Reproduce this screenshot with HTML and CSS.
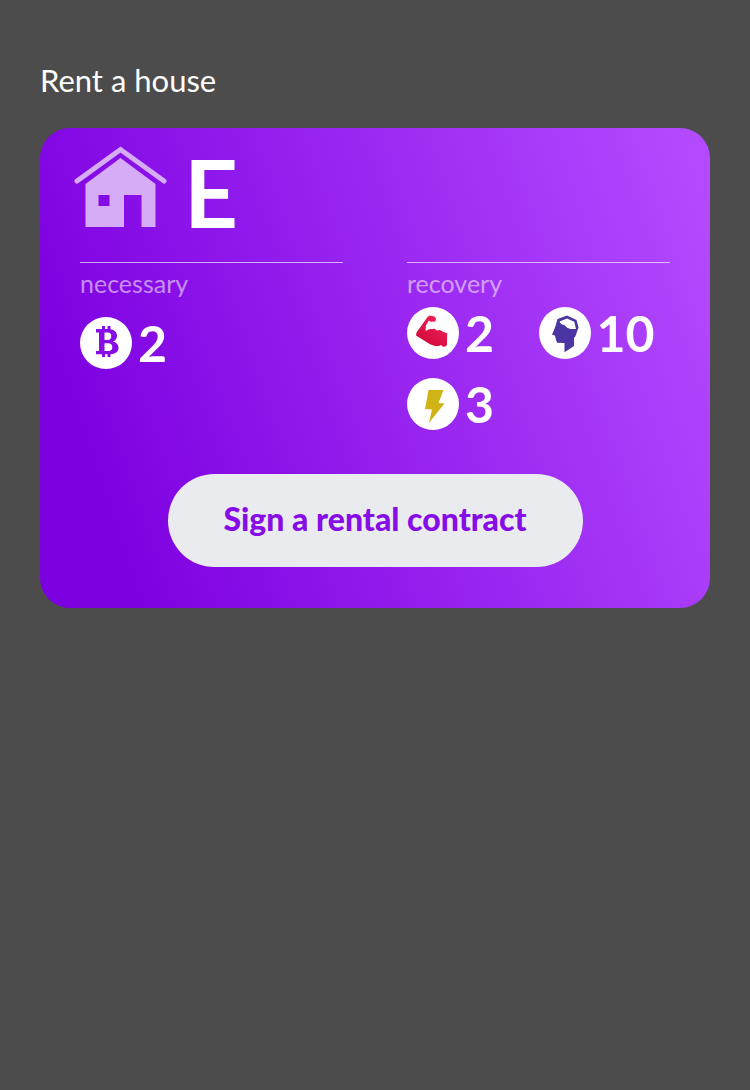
FILE: index.html
```html
<!DOCTYPE html>
<html lang="en">
<head>
<meta charset="utf-8">
<meta name="viewport" content="width=device-width, initial-scale=1">
<title>Rent a house</title>
<link rel="stylesheet" href="styles.css">
</head>
<body>
<main class="page">
  <h1 class="title">Rent a house</h1>
  <section class="card">
    <header class="card-head">
      <svg class="house" viewBox="0 0 94 82" aria-hidden="true">
        <path d="M3 35 L46.500 3.500 L90 35" fill="none" stroke="currentColor" stroke-width="5" stroke-linecap="round"/>
        <path fill="currentColor" fill-rule="evenodd" d="M46.500 12 L81.500 38 V81 H67.500 V49 H50 V81 H11.500 V38 Z M24.500 49 V60 H35.500 V49 Z"/>
      </svg>
      <span class="grade">E</span>
    </header>
    <div class="columns">
      <section class="column">
        <h2 class="label">necessary</h2>
        <ul class="stats stats-low">
          <li class="stat">
            <svg class="icon" viewBox="0 0 52 52" role="img" aria-label="Coins">
              <circle cx="26" cy="26" r="26" fill="#fff"/>
              <path fill="#860de5" fill-rule="evenodd" d="M16 12 H22 V9 H25 V12 H27.500 V9 H30.500 V12.200 C34.500 12.800 37 15.200 37 18.700 C37 21.500 35.500 23.500 33 24.600 C36.500 25.600 38.500 27.800 38.500 30.800 C38.500 34.800 35.500 37 30.500 37.200 V40 H27.500 V37.200 H25 V40 H22 V37.200 H16 V34 H19 V15.500 H16 Z M24.500 15.500 V23 H27.500 C30 23 31.300 21.800 31.300 19.200 C31.300 16.800 30 15.500 27.500 15.500 Z M24.500 26.300 V34 H28 C31 34 32.300 32.700 32.300 30.200 C32.300 27.600 31 26.300 28 26.300 Z"/>
            </svg>
            <span class="value">2</span>
          </li>
        </ul>
      </section>
      <section class="column">
        <h2 class="label">recovery</h2>
        <ul class="stats">
          <li class="stat">
            <svg class="icon" viewBox="0 0 52 52" role="img" aria-label="Strength">
              <defs><linearGradient id="arm" x1="1" y1="0" x2="0.300" y2="1"><stop offset="0" stop-color="#f5245a"/><stop offset="1" stop-color="#d00a3c"/></linearGradient></defs>
              <circle cx="26" cy="26" r="26" fill="#fff"/>
              <path fill="url(#arm)" d="M20.500 10 L22.500 8.600 L27.500 9.500 L29 11.500 L28.500 14.500 L23.500 14.800 L21.800 13.500 L19 18.500 L18.500 24 L22 22.200 L27.500 21.800 L30 23.600 L33 23 L36.500 25 L40.200 26.200 L40 38 L38 39.800 L35.500 39.500 L34 38 L32 39 L28 39 L23 37.300 L9 28.500 L9.500 25.500 Z"/>
            </svg>
            <span class="value">2</span>
          </li>
          <li class="stat">
            <svg class="icon" viewBox="0 0 52 52" role="img" aria-label="Mind">
              <circle cx="26" cy="26" r="26" fill="#fff"/>
              <path fill="#4a35a3" d="M18.500 12 L28 8.600 L37.500 13 L39.500 20.500 L36.500 29 L35 31 V39 L25.500 45.300 V36 L18 35.800 L16.500 31 L16 28.600 L13 27.800 L16 20.500 Z"/>
              <path fill="#fff" d="M20.500 14.500 L28 11.500 L35.300 14.700 L37 22 C31.500 22.500 28 21.500 25.500 18 C23.500 18 21.500 17 20.500 14.500 Z"/>
            </svg>
            <span class="value">10</span>
          </li>
          <li class="stat">
            <svg class="icon" viewBox="0 0 52 52" role="img" aria-label="Energy">
              <circle cx="26" cy="26" r="26" fill="#fff"/>
              <path fill="#d0b314" d="M21.500 12 L36.500 12 L31.500 25 L37.500 25.500 L22 45 L25 31.500 L18 31 Z"/>
            </svg>
            <span class="value">3</span>
          </li>
        </ul>
      </section>
    </div>
    <button class="sign" type="button">Sign a rental contract</button>
  </section>
</main>
</body>
</html>
```
FILE: styles.css
```css
* {
  box-sizing: border-box;
}

body {
  margin: 0;
  min-height: 100vh;
  background: #4c4c4c;
  color: #fff;
  font-family: Lato, "Open Sans", sans-serif;
}

.page {
  padding: 60px 40px 40px;
}

.title {
  margin: 0 0 28px;
  font-size: 31px;
  line-height: 40px;
  font-weight: 400;
}

.card {
  display: flex;
  flex-direction: column;
  padding: 14px 40px 41px;
  border-radius: 30px;
  background: linear-gradient(71deg, #7d00e1 11%, #b44aff 97%);
}

.card-head {
  display: flex;
  align-items: flex-start;
  gap: 16px;
  height: 120px;
  margin-left: -6px;
}

.house {
  width: 94px;
  height: 82px;
  margin-top: 4px;
  color: #d6acf7;
}

.grade {
  font-size: 94px;
  line-height: 100px;
  font-weight: 700;
}

.columns {
  display: grid;
  grid-template-columns: 1fr 1fr;
  gap: 64px;
}

.column {
  border-top: 1px solid rgba(255, 255, 255, 0.64);
}

.label {
  margin: 6px 0 0;
  font-size: 25px;
  line-height: 28px;
  font-weight: 400;
  color: rgba(255, 255, 255, 0.55);
}

.stats {
  display: grid;
  grid-template-columns: 1fr 1fr;
  row-gap: 19px;
  margin: 10px 0 0;
  padding: 0;
  list-style: none;
}

.stats-low {
  margin-top: 20px;
}

.stat {
  display: flex;
  align-items: center;
  gap: 6px;
}

.icon {
  flex: none;
  width: 52px;
  height: 52px;
}

.value {
  font-size: 50px;
  line-height: 52px;
  font-weight: 700;
}

.sign {
  align-self: center;
  width: 415px;
  max-width: 100%;
  min-height: 93px;
  margin-top: 44px;
  padding: 0 24px 4px;
  border: 0;
  border-radius: 47px;
  background: #eaebef;
  color: #860de5;
  font-family: inherit;
  font-size: 32px;
  line-height: 40px;
  font-weight: 900;
  cursor: pointer;
}
```
